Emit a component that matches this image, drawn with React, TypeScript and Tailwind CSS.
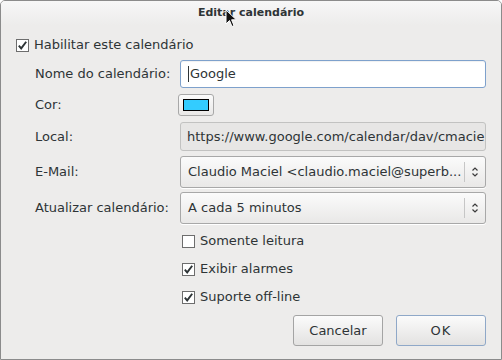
import React from 'react'

// small GTK-ish check box
function Check({ checked }: { checked: boolean }) {
  return (
    <svg width="13" height="13" viewBox="0 0 13 13" className="shrink-0">
      <rect x="0.5" y="0.5" width="12" height="12" fill="#ffffff" stroke="#6d6d6d" />
      {checked && (
        <path d="M2.8 6.6 L5.2 9.4 L10.2 2.8" fill="none" stroke="#2e3436" strokeWidth="1.9" />
      )}
    </svg>
  )
}

function Updown() {
  return (
    <svg width="8" height="12" viewBox="0 0 8 12">
      <path d="M1.5 4.5 L4 2 L6.5 4.5" fill="none" stroke="#3c3c3c" strokeWidth="1.2" />
      <path d="M1.5 7.5 L4 10 L6.5 7.5" fill="none" stroke="#3c3c3c" strokeWidth="1.2" />
    </svg>
  )
}

function Combo({ text }: { text: string }) {
  return (
    <div className="h-[32px] flex items-center rounded-[3px] border border-[#a8a8a8] bg-gradient-to-b from-[#fbfbfb] to-[#e9e8e7] shadow-[0_1px_0_#ffffff]">
      <span className="flex-1 pl-[7px] whitespace-nowrap overflow-hidden">{text}</span>
      <div className="w-px h-[20px] bg-[#c6c6c6]" />
      <div className="w-[20px] flex justify-center">
        <Updown />
      </div>
    </div>
  )
}

function Option({ checked, label }: { checked: boolean; label: string }) {
  return (
    <div className="h-[28px] flex items-center gap-[5px] pl-[2px]">
      <Check checked={checked} />
      <span>{label}</span>
    </div>
  )
}

export default function App() {
  return (
    <div className="relative w-[502px] h-[360px] flex flex-col overflow-hidden rounded-t-[5px] border border-[#8b8b8b] bg-[#edeceb] font-['DejaVu_Sans',sans-serif] text-[13px] text-[#2e3436]">
      {/* title bar */}
      <div className="h-[24px] flex items-center justify-center bg-gradient-to-b from-[#f7f7f7] to-[#edeceb]">
        <span className="font-bold text-[11px] text-[#2e3436]">Editar calendário</span>
      </div>

      {/* mouse cursor */}
      <svg width="13" height="20" viewBox="0 0 13 20" className="absolute left-[224px] top-[8px]">
        <path d="M1 1 L1 15 L4.5 11.5 L7 17.5 L9 16.6 L6.6 10.8 L11.4 10.8 Z" fill="#111" stroke="#fff" strokeWidth="1" />
      </svg>

      <div className="flex items-center gap-[5px] pl-[15px] mt-[13px] h-[14px]">
        <Check checked />
        <span>Habilitar este calendário</span>
      </div>

      <div className="grid grid-cols-[145px_306px] pl-[34px] mt-[8px] items-center">
        <span>Nome do calendário:</span>
        <div className="h-[28px] flex items-center rounded-[3px] border border-[#7ea1cc] bg-white pl-[7px] shadow-[inset_0_1px_1px_rgba(0,0,0,0.06)]">
          <span className="w-px h-[16px] bg-[#2e3436] mr-[1px]" />
          Google
        </div>

        <span className="mt-[6px]">Cor:</span>
        <div className="mt-[6px] h-[22px] flex">
          <div className="w-[36px] h-[22px] -ml-[2px] flex items-center justify-center rounded-[3px] border border-[#a8a8a8] bg-gradient-to-b from-[#fbfbfb] to-[#e9e8e7]">
            <div className="w-[26px] h-[12px] border border-black bg-[#33ccff]" />
          </div>
        </div>

        <span className="mt-[6px]">Local:</span>
        <div className="mt-[6px] h-[29px] flex items-center overflow-hidden whitespace-nowrap rounded-[3px] border border-[#c2c2c1] bg-[#e7e6e5] pl-[6px]">
          https://www.google.com/calendar/dav/cmaciel
        </div>

        <span className="mt-[5px]">E-Mail:</span>
        <div className="mt-[5px]">
          <Combo text="Claudio Maciel <claudio.maciel@superb..." />
        </div>

        <span className="mt-[4px]">Atualizar calendário:</span>
        <div className="mt-[4px]">
          <Combo text="A cada 5 minutos" />
        </div>

        <span />
        <div className="mt-[3px]">
          <Option checked={false} label="Somente leitura" />
          <Option checked label="Exibir alarmes" />
          <Option checked label="Suporte off-line" />
        </div>
      </div>

      <div className="flex justify-end gap-[13px] pr-[15px] mt-[4px]">
        <button className="w-[90px] h-[31px] rounded-[3px] border border-[#a4a4a4] bg-gradient-to-b from-[#fbfbfb] to-[#e3e2e1] text-[#2e3436]">
          Cancelar
        </button>
        <button className="w-[90px] h-[31px] rounded-[3px] border border-[#8fa8c8] bg-gradient-to-b from-[#fbfbfb] to-[#e3e2e1] text-[#2e3436] tracking-[1px]">
          OK
        </button>
      </div>
    </div>
  )
}
